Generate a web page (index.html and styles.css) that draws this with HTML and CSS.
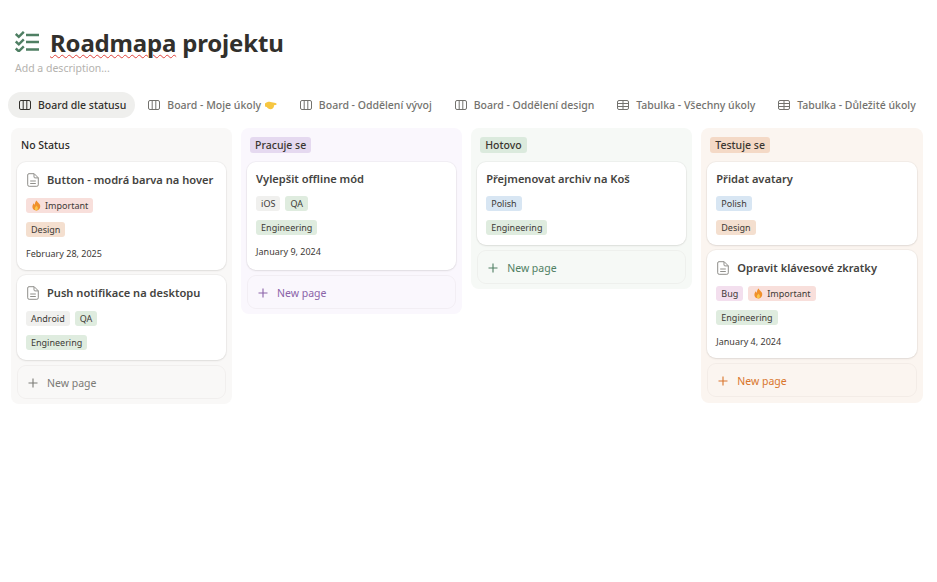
FILE: index.html
```html
<!DOCTYPE html>
<html lang="cs">
<head>
<meta charset="utf-8">
<title>Roadmapa projektu</title>
<link rel="stylesheet" href="styles.css">
</head>
<body>
<svg width="0" height="0" class="defs">
  <defs>
    <symbol id="board" viewBox="0 0 12 10"><rect x=".5" y=".5" width="11" height="9" rx="1.5" fill="none" stroke="currentColor"/><path d="M4.2.5v9M7.8.5v9" stroke="currentColor" fill="none"/></symbol>
    <symbol id="table" viewBox="0 0 12 10"><rect x=".5" y=".5" width="11" height="9" rx="1.5" fill="none" stroke="currentColor"/><path d="M.5 3.5h11M.5 6.5h11M6 .5v9" stroke="currentColor" fill="none"/></symbol>
    <symbol id="doc" viewBox="0 0 12 14"><path d="M2 .7h5.2L11.3 4.8v7a1.5 1.5 0 0 1-1.5 1.5H2.2A1.5 1.5 0 0 1 .7 11.800V2A1.3 1.300 0 0 1 2 .7zM7 .9v3a1 1 0 0 0 1 1h3.200M3.200 8h5.600M3.200 10.500h5.600" fill="none" stroke="currentColor" stroke-width="1"/></symbol>
    <symbol id="plus" viewBox="0 0 10 10"><path d="M5 .5v9M.5 5h9" fill="none" stroke="currentColor" stroke-width="1.100"/></symbol>
    <symbol id="fire" viewBox="0 0 12 12"><path d="M6.300.5c.4 2 2.200 2.600 3.300 4.500 1.200 2.200.2 6.500-3.600 6.500S1 8.500 1.800 5.800c.3-1 .9-1.600 1.300-2.200.2 1 .6 1.400 1.100 1.700C4 3.500 4.800 1.500 6.300.5z" fill="#f0902c"/><path d="M6 6c.3 1 1.800 1.700 1.500 3.200-.2 1.300-1 2.300-1.700 2.300S4 10.500 4.200 9C4.400 7.800 5.600 7.200 6 6z" fill="#fbc64a"/></symbol>
  </defs>
</svg>
<header class="head">
  <div class="title-row">
    <svg class="title-icon" width="24" height="21" viewBox="0 0 24 21">
      <path d="M.8 3l3 2.800L8.800.8M.8 10.500l3 2.800 5-5M.8 17.500l3 2.800 5-5" fill="none" stroke="#4f7f63" stroke-width="2.400"/>
      <path d="M11 4h13M11 11h13M11 18.500h13" fill="none" stroke="#4f7f63" stroke-width="2.400"/>
    </svg>
    <h1 class="title"><span class="misspelt">Roadmapa</span> projektu</h1>
  </div>
  <p class="desc">Add a description...</p>
</header>
<nav class="tabs">
  <a class="tab tab-active"><svg class="tab-icon"><use href="#board"/></svg>Board dle statusu</a>
  <a class="tab"><svg class="tab-icon"><use href="#board"/></svg>Board - Moje úkoly
    <svg class="hand" width="12" height="9" viewBox="0 0 12 9"><path d="M0 2.500C1.500 1 4 .6 5.500 1L10.500 2c1.500.4 1.500 1.800 0 2L9 4.200c.3 2.200-1.300 4-3.500 4-1.800 0-3-1-3.800-2.200L0 5.500z" fill="#f6c641"/></svg></a>
  <a class="tab"><svg class="tab-icon"><use href="#board"/></svg>Board - Oddělení vývoj</a>
  <a class="tab"><svg class="tab-icon"><use href="#board"/></svg>Board - Oddělení design</a>
  <a class="tab"><svg class="tab-icon"><use href="#table"/></svg>Tabulka - Všechny úkoly</a>
  <a class="tab"><svg class="tab-icon"><use href="#table"/></svg>Tabulka - Důležité úkoly</a>
</nav>
<main class="board">
  <section class="col col-none">
    <div class="col-head"><span class="col-plain">No Status</span></div>
    <article class="card">
      <h2 class="card-title"><svg class="doc"><use href="#doc"/></svg>Button - modrá barva na hover</h2>
      <div class="tags"><span class="tag t-red"><svg class="fire"><use href="#fire"/></svg>Important</span></div>
      <div class="tags"><span class="tag t-orange">Design</span></div>
      <p class="date">February 28, 2025</p>
    </article>
    <article class="card">
      <h2 class="card-title"><svg class="doc"><use href="#doc"/></svg>Push notifikace na desktopu</h2>
      <div class="tags"><span class="tag t-gray">Android</span><span class="tag t-green">QA</span></div>
      <div class="tags"><span class="tag t-green">Engineering</span></div>
    </article>
    <button class="new"><svg class="plus"><use href="#plus"/></svg>New page</button>
  </section>
  <section class="col col-purple">
    <div class="col-head"><span class="status s-purple">Pracuje se</span></div>
    <article class="card">
      <h2 class="card-title">Vylepšit offline mód</h2>
      <div class="tags"><span class="tag t-gray">iOS</span><span class="tag t-green">QA</span></div>
      <div class="tags"><span class="tag t-green">Engineering</span></div>
      <p class="date">January 9, 2024</p>
    </article>
    <button class="new"><svg class="plus"><use href="#plus"/></svg>New page</button>
  </section>
  <section class="col col-green">
    <div class="col-head"><span class="status s-green">Hotovo</span></div>
    <article class="card">
      <h2 class="card-title">Přejmenovat archiv na Koš</h2>
      <div class="tags"><span class="tag t-blue">Polish</span></div>
      <div class="tags"><span class="tag t-green">Engineering</span></div>
    </article>
    <button class="new"><svg class="plus"><use href="#plus"/></svg>New page</button>
  </section>
  <section class="col col-orange">
    <div class="col-head"><span class="status s-orange">Testuje se</span></div>
    <article class="card">
      <h2 class="card-title">Přidat avatary</h2>
      <div class="tags"><span class="tag t-blue">Polish</span></div>
      <div class="tags"><span class="tag t-orange">Design</span></div>
    </article>
    <article class="card">
      <h2 class="card-title"><svg class="doc"><use href="#doc"/></svg>Opravit klávesové zkratky</h2>
      <div class="tags"><span class="tag t-pink">Bug</span><span class="tag t-red"><svg class="fire"><use href="#fire"/></svg>Important</span></div>
      <div class="tags"><span class="tag t-green">Engineering</span></div>
      <p class="date">January 4, 2024</p>
    </article>
    <button class="new"><svg class="plus"><use href="#plus"/></svg>New page</button>
  </section>
</main>
</body>
</html>
```
FILE: styles.css
```css
* { box-sizing: border-box; }
html, body { margin: 0; padding: 0; background: #fff; }
body { width: 937px; height: 582px; overflow: hidden; font-family: "Noto Sans", "Open Sans", sans-serif; color: #32302c; }
.defs { display: block; height: 0; }

.head { padding: 28px 0 0 15px; }
.title-row { display: flex; align-items: center; gap: 11px; height: 30px; }
.title-icon { display: block; margin-top: -4px; }
.title { margin: 0; font-size: 24px; line-height: 30px; font-weight: 700; letter-spacing: -.18px; color: #32302c; }
.misspelt { text-decoration: underline wavy #e0433c 1px; text-underline-offset: 2px; }
.desc { margin: 3px 0 0; font-size: 10.500px; line-height: 15px; color: #b4b2ae; }

.tabs { display: flex; margin: 16px 0 0 8px; height: 26px; }
.tab { display: flex; align-items: center; gap: 7px; height: 26px; padding: 0 9px 0 11px; margin-right: 2.800px; border-radius: 13px; font-size: 10.500px; font-weight: 500; color: #73726e; white-space: nowrap; }
.tab-active { background: #efefed; color: #32302c; margin-right: 2px; }
.tab-icon { width: 12px; height: 10px; flex: none; }
.hand { margin-left: -3px; }

.board { display: flex; gap: 9.500px; align-items: flex-start; margin: 10px 0 0 11px; }
.col { width: 220.600px; padding: 0 6px 5px; border-radius: 8px; }
.col-none { background: #f9f8f7; }
.col-purple { background: #faf7fd; }
.col-green { background: #f6f9f6; }
.col-orange { background: #fbf5f0; padding-bottom: 6px; width: 221.500px; }
.col-head { height: 34px; display: flex; align-items: center; }
.col-plain { font-size: 10.500px; padding-left: 4px; font-weight: 500; color: #2c2b28; }
.status { height: 16px; padding: 0 5px; margin-left: 3px; border-radius: 3px; font-size: 10.500px; line-height: 16px; font-weight: 500; color: #3a352f; }
.s-purple { background: #e5d9f0; }
.s-green { background: #dbeadd; }
.s-orange { background: #f4d9c6; }

.card { background: #fff; border-radius: 9px; padding: 8px 9px 7px; margin-bottom: 5px; box-shadow: 0 0 0 1px rgba(40,30,20,.035), 0 1px 2px rgba(40,30,20,.09); }
.card-title { display: flex; align-items: center; gap: 8.500px; margin: 0 0 8px; line-height: 18px; font-size: 11.100px; font-weight: 600; color: #444340; white-space: nowrap; }
.doc { width: 12px; height: 20px; flex: none; margin-left: .5px; color: #8f8e8a; }
.tags { display: flex; gap: 5px; height: 15px; margin-bottom: 9px; }
.tags:last-child { margin-bottom: 3px; }
.tag { display: flex; align-items: center; gap: 3px; height: 15px; padding: 0 5px; border-radius: 3px; font-size: 9px; color: #3d3a36; white-space: nowrap; }
.fire { width: 11px; height: 11px; }
.t-red { background: #f8dfdb; }
.t-orange { background: #f4dfcf; }
.t-gray { background: #f0f0ee; }
.t-green { background: #dfecdf; }
.t-blue { background: #d8e6f3; }
.t-pink { background: #f3dfee; }
.date { margin: 10px 0 3px; font-size: 9px; line-height: 13px; color: #3d3a36; }
.col-purple .date { margin-bottom: 5px; }

.new { display: flex; align-items: center; gap: 9px; width: 100%; height: 34px; padding: 1px 0 0 10px; border: 1px solid rgba(40,30,20,.04); border-radius: 9px; background: transparent; font-family: inherit; font-size: 10.500px; text-align: left; }
.plus { width: 10px; height: 10px; flex: none; }
.col-none .new { color: #7b7a76; }
.col-purple .new { color: #8a63a8; }
.col-green .new { color: #4f7f63; }
.col-orange .new { color: #d9752c; }
```
